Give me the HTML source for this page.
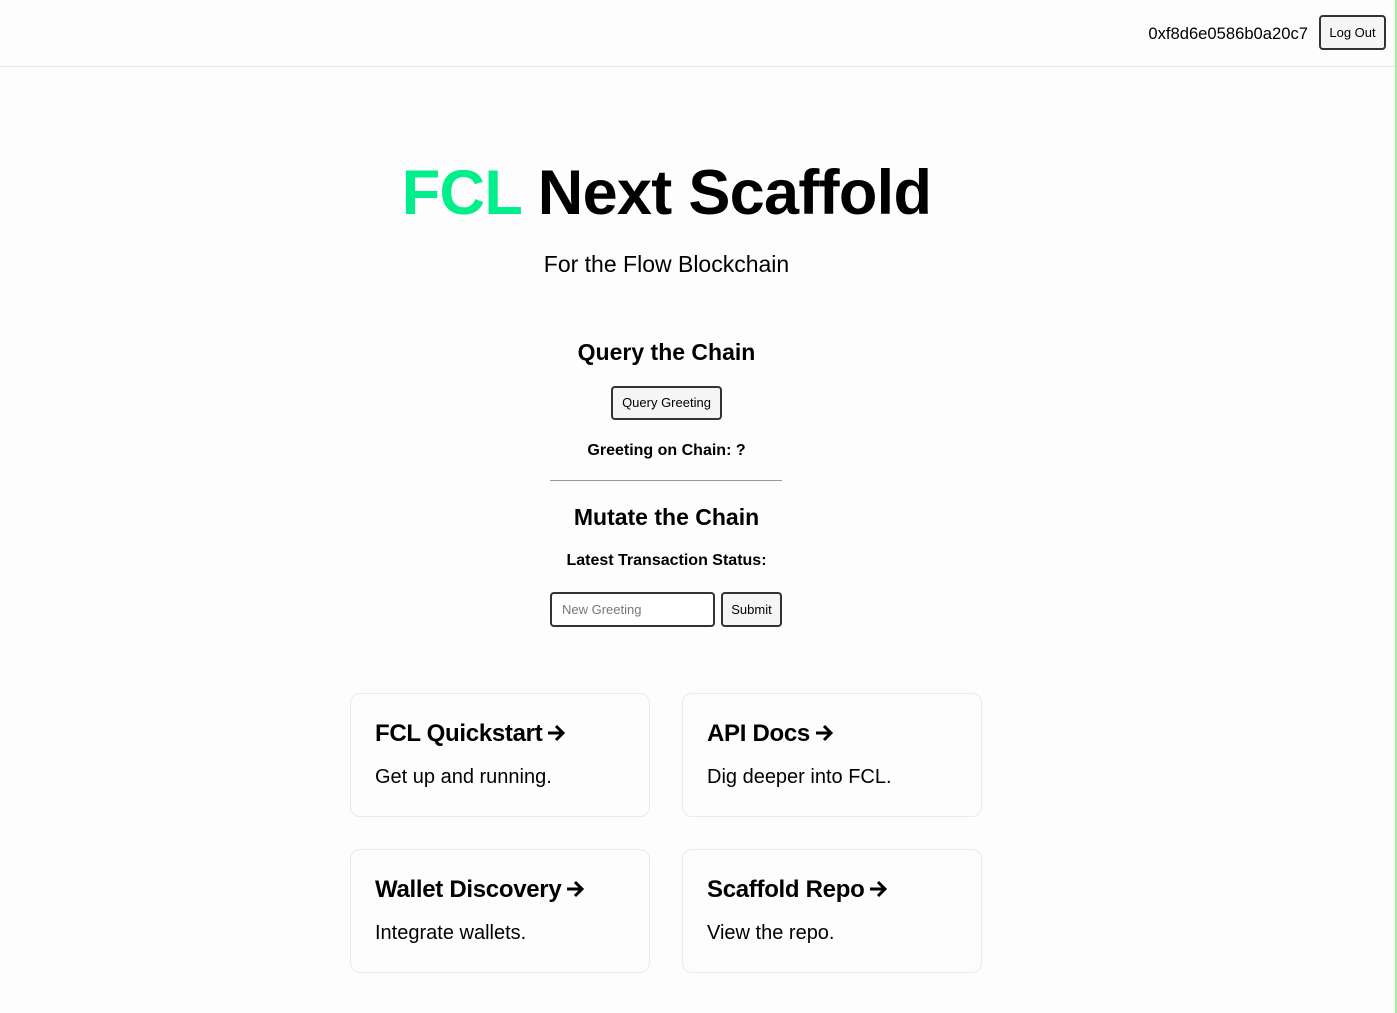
<!DOCTYPE html>
<html><head><style>
body{margin:0;width:1397px;height:1013px;background:#fdfdfd;font-family:"Liberation Sans",sans-serif;color:#000;position:relative;overflow:hidden}
.hdr{position:absolute;left:0;top:0;width:1397px;height:66px;border-bottom:1px solid #e6e6e6}
.addr{position:absolute;right:89px;top:24px;font-size:16.6px}
.btn{position:absolute;background:#f5f5f5;border:2px solid #333;border-radius:4px;font-size:13px;box-sizing:border-box;text-align:center;font-family:"Liberation Sans",sans-serif}
.green{position:absolute;right:0;top:0;width:2px;height:1013px;background:#9ef19e}
.c{position:absolute;left:0;width:1333px;text-align:center}
.card{position:absolute;width:300px;height:124px;border:1px solid #eaeaea;border-radius:10px;box-sizing:border-box;padding:25px 24px}
.card h3{margin:0;font-size:24px;font-weight:bold;line-height:30px;letter-spacing:-0.3px}
.card h3 svg{vertical-align:-1px;margin-left:4px}
.card p{margin:14px 0 0;font-size:20px;line-height:28px}
</style></head><body>
<div class="hdr"><span class="addr">0xf8d6e0586b0a20c7</span>
<div class="btn" style="left:1319px;top:15px;width:67px;height:35px;line-height:31px">Log Out</div></div>
<div class="green"></div>
<div class="c" style="top:155px;font-size:63px;font-weight:bold;letter-spacing:-0.7px;line-height:76px"><span style="color:#00ef8b">FCL</span> Next Scaffold</div>
<div class="c" style="top:251px;font-size:23px">For the Flow Blockchain</div>
<div class="c" style="top:339px;font-size:23px;font-weight:bold">Query the Chain</div>
<div class="btn" style="left:611px;top:386px;width:111px;height:34px;line-height:30px">Query Greeting</div>
<div class="c" style="top:442px;font-size:16px;font-weight:bold">Greeting on Chain: ?</div>
<div style="position:absolute;left:550px;top:480px;width:232px;height:1px;background:#999"></div>
<div class="c" style="top:504px;font-size:23px;font-weight:bold">Mutate the Chain</div>
<div class="c" style="top:552px;font-size:16px;font-weight:bold">Latest Transaction Status:</div>
<div class="btn" style="left:550px;top:592px;width:165px;height:35px;line-height:31px;background:#fff;text-align:left;padding-left:10px;color:#777">New Greeting</div>
<div class="btn" style="left:721px;top:592px;width:61px;height:35px;line-height:31px">Submit</div>
<div class="card" style="left:350px;top:693px"><h3>FCL Quickstart<svg width="20" height="18" viewBox="0 0 20 18"><path d="M2 9H17M10 2L17 9L10 16" stroke="#000" stroke-width="3" fill="none"/></svg></h3><p>Get up and running.</p></div>
<div class="card" style="left:682px;top:693px"><h3>API Docs<svg width="20" height="18" viewBox="0 0 20 18"><path d="M2 9H17M10 2L17 9L10 16" stroke="#000" stroke-width="3" fill="none"/></svg></h3><p>Dig deeper into FCL.</p></div>
<div class="card" style="left:350px;top:849px"><h3>Wallet Discovery<svg width="20" height="18" viewBox="0 0 20 18"><path d="M2 9H17M10 2L17 9L10 16" stroke="#000" stroke-width="3" fill="none"/></svg></h3><p>Integrate wallets.</p></div>
<div class="card" style="left:682px;top:849px"><h3>Scaffold Repo<svg width="20" height="18" viewBox="0 0 20 18"><path d="M2 9H17M10 2L17 9L10 16" stroke="#000" stroke-width="3" fill="none"/></svg></h3><p>View the repo.</p></div>
</body></html>
